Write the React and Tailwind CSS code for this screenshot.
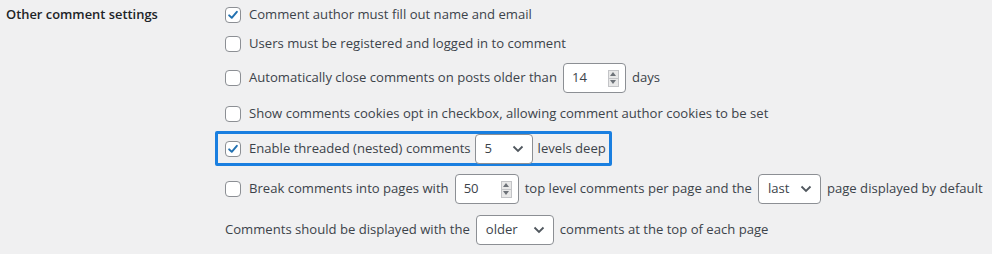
import React from "react";

function Check({ checked }) {
  return (
    <span className="inline-flex h-4 w-4 shrink-0 items-center justify-center rounded-[4px] border border-[#8c8f94] bg-white">
      {checked && (
        <svg width="14" height="14" viewBox="0 0 20 20">
          <path d="M4.5 10.5 L8.2 14 L15.5 5.5" fill="none" stroke="#2271b1" strokeWidth="2.8" strokeLinecap="round" strokeLinejoin="round" />
        </svg>
      )}
    </span>
  );
}

function NumInput({ value, w }) {
  return (
    <span className={`mx-[6px] inline-flex h-[30px] items-center justify-between rounded-[4px] border border-[#8c8f94] bg-white pl-[8px] pr-[6px] ${w}`}>
      <span>{value}</span>
      <span className="flex h-[17px] w-[11px] flex-col border border-[#c3c4c7] bg-[#e8e8e8]">
        <span className="flex flex-1 items-center justify-center border-b border-[#c3c4c7]">
          <svg width="6" height="4" viewBox="0 0 6 4"><path d="M0 4 L3 0 L6 4Z" fill="#6d7278" /></svg>
        </span>
        <span className="flex flex-1 items-center justify-center">
          <svg width="6" height="4" viewBox="0 0 6 4"><path d="M0 0 L3 4 L6 0Z" fill="#6d7278" /></svg>
        </span>
      </span>
    </span>
  );
}

function Select({ value, w, m = "mx-[6px]" }) {
  return (
    <span className={`${m} inline-flex h-[30px] items-center justify-between rounded-[4px] border border-[#8c8f94] bg-white pl-[9px] pr-[8px] ${w}`}>
      <span>{value}</span>
      <svg width="12" height="8" viewBox="0 0 12 8">
        <path d="M1.5 1.5 L6 6 L10.5 1.5" fill="none" stroke="#50575e" strokeWidth="1.8" />
      </svg>
    </span>
  );
}

export default function App() {
  return (
    <div
      className="flex h-[254px] w-[992px] whitespace-nowrap bg-[#f0f0f1] text-[13.1px] text-[#3c434a]"
      style={{ fontFamily: '"Open Sans", "Noto Sans", sans-serif' }}
    >
      <div className="w-[225px] shrink-0 pl-[6px]">
        <div className="flex h-[29px] items-center text-[12.9px] font-semibold text-[#1d2327]">Other comment settings</div>
      </div>
      <div className="flex flex-col">
        <div className="flex h-[29px] items-center gap-[8px]">
          <Check checked />
          <span>Comment author must fill out name and email</span>
        </div>
        <div className="flex h-[30px] items-center gap-[8px]">
          <Check />
          <span>Users must be registered and logged in to comment</span>
        </div>
        <div className="flex h-[38px] items-center gap-[8px]">
          <Check />
          <span className="flex items-center">
            Automatically close comments on posts older than
            <NumInput value="14" w="w-[63px]" />
            days
          </span>
        </div>
        <div className="flex h-[34px] items-center gap-[8px]">
          <Check />
          <span>Show comments cookies opt in checkbox, allowing comment author cookies to be set</span>
        </div>
        <div className="-ml-[10px] flex h-[35px] w-[397px] items-center gap-[8px] rounded-[2px] border-[3px] border-[#1a7fe0] pl-[7px]">
          <Check checked />
          <span className="flex items-center">
            Enable threaded (nested) comments
            <Select value="5" w="w-[58px]" m="ml-[4px] mr-[5px]" />
            levels deep
          </span>
        </div>
        <div className="flex h-[46px] items-center gap-[8px]">
          <Check />
          <span className="flex items-center">
            Break comments into pages with
            <NumInput value="50" w="w-[64px]" />
            top level comments per page and the
            <Select value="last" w="w-[63px]" />
            page displayed by default
          </span>
        </div>
        <div className="flex h-[36px] items-center">
          <span className="flex items-center">
            Comments should be displayed with the
            <Select value="older" w="w-[78px]" />
            comments at the top of each page
          </span>
        </div>
      </div>
    </div>
  );
}
